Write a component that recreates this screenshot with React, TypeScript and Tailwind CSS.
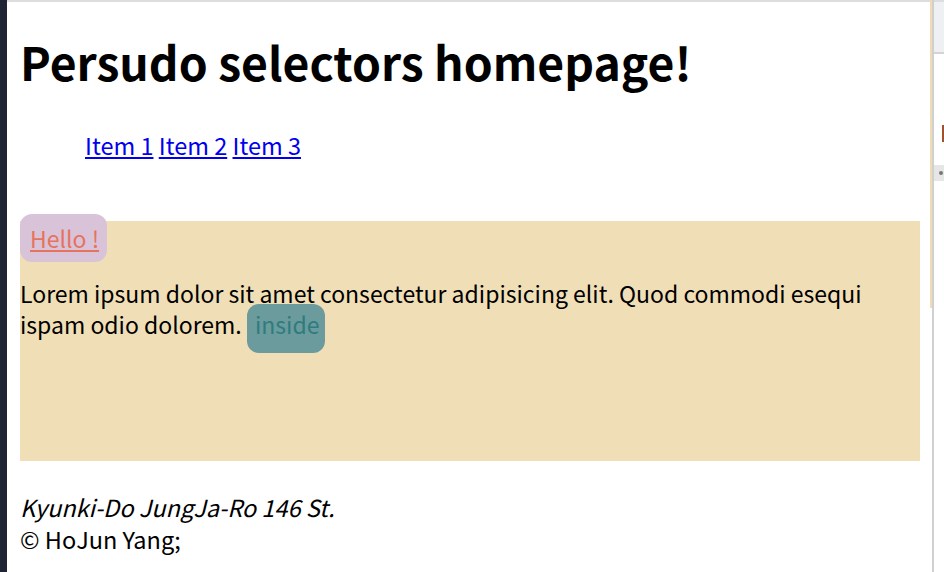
export default function App() {
  return (
    <div className="flex h-[572px] w-[944px] overflow-hidden bg-white font-['Noto_Sans_CJK_KR','Noto_Sans',sans-serif] text-black">
      {/* left editor edge */}
      <div className="w-[7px] shrink-0 bg-[#1f2333]" />

      {/* page preview */}
      <div className="flex w-[923px] shrink-0 flex-col border-t-2 border-[#dddddd] pl-[13px] pr-[10px]">
        <h1 className="mt-[29px] text-[46.3px] font-bold leading-[60px]">Persudo selectors homepage!</h1>

        <nav className="mt-[39px] pl-[65px] text-[23.5px] leading-[30px]">
          <a href="#" className="text-[#0000ee] underline">Item 1</a>{' '}
          <a href="#" className="text-[#0000ee] underline">Item 2</a>{' '}
          <a href="#" className="text-[#0000ee] underline">Item 3</a>
        </nav>

        <section className="mt-[61px] h-[240px] bg-[#f0deb7]">
          <a
            href="#"
            className="-mt-[7px] inline-block rounded-[12px] bg-[#d9c3d9] pl-[10px] pr-[8px] text-[23px] leading-[48px] text-[#e5735e] underline"
          >
            Hello !
          </a>
          <p className="mt-[16px] text-[23px] leading-[31px]">
            Lorem ipsum dolor sit amet consectetur adipisicing elit. Quod commodi esequi ispam odio dolorem.{' '}
            <span className="rounded-[12px] bg-[#6b9b9d] pb-[12px] pl-[8px] pr-[6px] pt-[3px] text-[#2e7c7d]">inside</span>
          </p>
        </section>

        <footer className="mt-[30px] text-[23.5px] leading-[32px]">
          <address className="italic">Kyunki-Do JungJa-Ro 146 St.</address>
          <p>© HoJun Yang;</p>
        </footer>
      </div>

      {/* scroll thumb + divider */}
      <div className="flex w-[2px] shrink-0 flex-col">
        <div className="h-[308px] bg-[#efdcb4]" />
      </div>
      <div className="w-[2px] shrink-0 bg-[#d0d0d0]" />

      {/* devtools sliver */}
      <div className="relative flex-1 border-t-2 border-[#dddddd]">
        <div className="h-[52px] border-b-2 border-[#d4d4d4] bg-[#eef0f4]" />
        <div className="absolute left-[8px] top-[123px] h-[17px] w-[3px] bg-[#a0522d]" />
        <div className="absolute left-0 top-[163px] h-[16px] w-full bg-[#e6e6e6]">
          <div className="ml-[5px] mt-[6px] h-[4px] w-[4px] rounded-full bg-[#777]" />
        </div>
      </div>
    </div>
  );
}
